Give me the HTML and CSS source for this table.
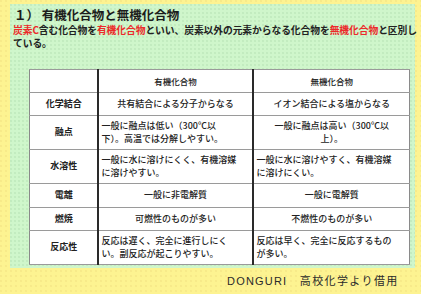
FILE: index.html
```html
<!DOCTYPE html>
<html lang="ja">
<head>
<meta charset="utf-8">
<link rel="stylesheet" href="styles.css">
</head>
<body>
<div class="slide">
  <div class="panel">
    <h1 class="title">１）&nbsp;有機化合物と無機化合物</h1>
    <p class="lead"><span class="red">炭素C</span>含む化合物を<span class="red">有機化合物</span>といい、炭素以外の元素からなる化合物を<span class="red">無機化合物</span>と区別し<br>ている。</p>
    <table class="grid">
      <colgroup><col class="c1"><col class="c2"><col class="c3"></colgroup>
      <tr class="r-s"><th></th><th class="hd">有機化合物</th><th class="hd">無機化合物</th></tr>
      <tr class="r-s"><th>化学結合</th><td class="ctr">共有結合による分子からなる</td><td class="ctr">イオン結合による塩からなる</td></tr>
      <tr class="r-l"><th>融点</th><td>一般に融点は低い（300℃以<br>下）。高温では分解しやすい。</td><td class="ctr">一般に融点は高い（300℃以<br>上）。</td></tr>
      <tr class="r-l"><th>水溶性</th><td>一般に水に溶けにくく、有機溶媒<br>に溶けやすい。</td><td>一般に水に溶けやすく、有機溶媒<br>に溶けにくい。</td></tr>
      <tr class="r-m"><th>電離</th><td class="ctr">一般に非電解質</td><td class="ctr">一般に電解質</td></tr>
      <tr class="r-s"><th>燃焼</th><td class="ctr">可燃性のものが多い</td><td class="ctr">不燃性のものが多い</td></tr>
      <tr class="r-l"><th>反応性</th><td>反応は遅く、完全に進行しにく<br>い。副反応が起こりやすい。</td><td>反応は早く、完全に反応するもの<br>が多い。</td></tr>
    </table>
  </div>
  <div class="credit"><span class="latin">DONGURI</span>　高校化学より借用</div>
</div>
</body>
</html>
```
FILE: styles.css
```css
html, body {
  margin: 0;
  padding: 0;
}
body {
  width: 421px;
  height: 294px;
  overflow: hidden;
  background: #fdf391;
  font-family: "Noto Sans CJK JP", sans-serif;
  color: #1e1e1e;
}
.slide {
  width: 421px;
  height: 294px;
  padding-top: 4px;
  box-sizing: border-box;
  background:
    radial-gradient(circle at 1px 1px, rgba(230, 200, 110, 0.35) 0.6px, transparent 0.9px) 0 0 / 5px 5px,
    #fdf391;
}
.panel {
  margin-left: 10px;
  width: 405px;
  height: 264px;
  box-sizing: border-box;
  padding: 2px 0 0 0;
  background:
    radial-gradient(circle at 1px 1px, rgba(150, 200, 150, 0.35) 0.6px, transparent 0.9px) 0 0 / 4px 4px,
    #cff6cb;
}
.title {
  margin: 0 0 0 4px;
  font-size: 12.5px;
  line-height: 17px;
  font-weight: 700;
  color: #1c1c1c;
}
.lead {
  margin: 1px 0 0 3px;
  font-size: 9.8px;
  line-height: 13px;
  font-weight: 700;
  color: #222;
  letter-spacing: -0.1px;
  white-space: nowrap;
}
.red {
  color: #ec2a2a;
}
.grid {
  margin: 19px 0 0 19px;
  width: 380px;
  border-collapse: collapse;
  table-layout: fixed;
  background: #fff;
  border: 1px solid #8a8a8a;
  font-size: 9px;
  color: #222;
}
.c1 { width: 68px; }
.c2 { width: 155px; }
.c3 { width: 157px; }
.grid th, .grid td {
  border-top: 1px solid #9a9a9a;
  border-bottom: 1px solid #9a9a9a;
  padding: 0 2px 0 3px;
  line-height: 12.5px;
  vertical-align: middle;
  white-space: nowrap;
}
.grid th {
  font-weight: 700;
  text-align: center;
}
.grid th.hd {
  font-weight: 500;
  font-size: 8.5px;
}
.grid td {
  font-weight: 500;
  text-align: left;
}
.grid td.ctr {
  text-align: center;
}
.grid tr > :first-child {
  border-right: 2px solid #2a2a2a;
}
.grid tr > :nth-child(2) {
  border-right: 2px solid #2a2a2a;
}
.r-s { height: 23px; }
.r-m { height: 24px; }
.r-l { height: 34px; }
.credit {
  margin: 5px 0 0 227px;
  font-size: 11px;
  line-height: 14px;
  color: #2a2a2a;
  letter-spacing: 1.4px;
  white-space: nowrap;
}
.latin {
  font-family: "Liberation Sans", sans-serif;
  letter-spacing: 1.2px;
}
```
